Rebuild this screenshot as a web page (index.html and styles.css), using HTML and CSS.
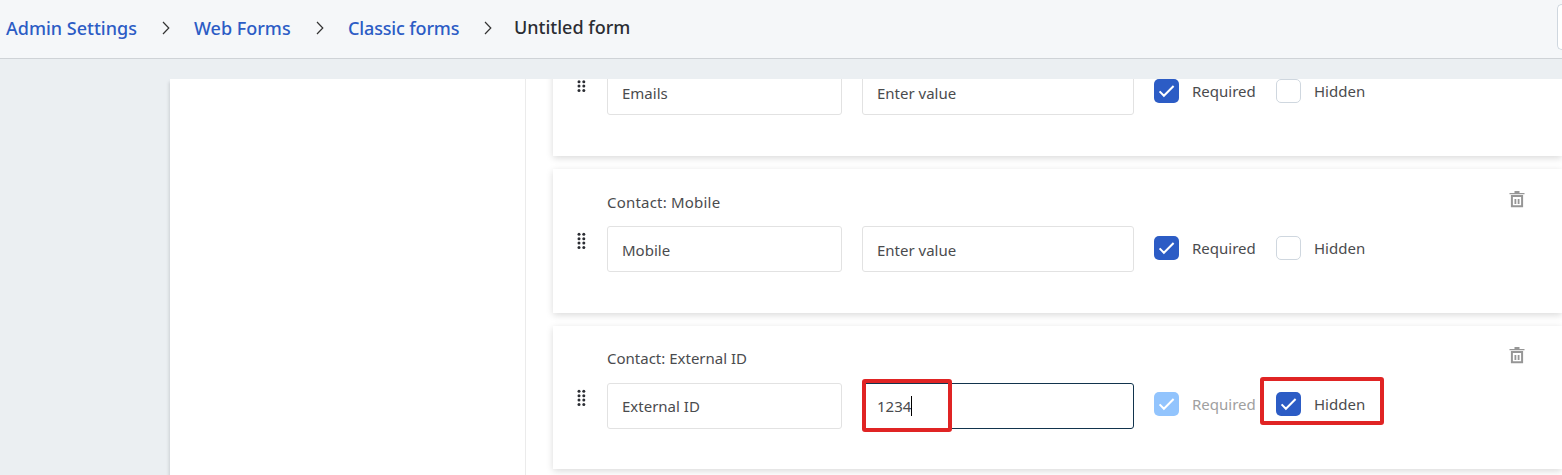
FILE: index.html
```html
<!DOCTYPE html>
<html lang="en">
<head>
    <meta charset="UTF-8">
    <meta name="viewport" content="width=device-width, initial-scale=1.0">
    <title>Untitled form</title>
    <link rel="stylesheet" href="styles.css">
</head>
<body>
    <!-- Shared icons -->
    <svg class="sprite" width="0" height="0">
        <symbol id="chevron" viewBox="0 0 8 14">
            <path d="M1 1l5.8 6L1 13" fill="none" stroke="#333" stroke-width="1.2"/>
        </symbol>
        <symbol id="drag" viewBox="0 0 10 18">
            <g fill="#2b2d33">
                <circle cx="2" cy="2.2" r="1.5"/><circle cx="6.8" cy="2.2" r="1.5"/>
                <circle cx="2" cy="6.7" r="1.5"/><circle cx="6.8" cy="6.7" r="1.5"/>
                <circle cx="2" cy="11.1" r="1.5"/><circle cx="6.8" cy="11.1" r="1.5"/>
                <circle cx="2" cy="15.6" r="1.5"/><circle cx="6.8" cy="15.6" r="1.5"/>
            </g>
        </symbol>
        <symbol id="trash" viewBox="0 0 16 17">
            <path d="M5.5 0h5v2h5v1.2h-15V2h5z" fill="#969696"/>
            <path d="M2.9 5h10.2v10.2H2.9z" fill="none" stroke="#969696" stroke-width="2"/>
            <path d="M6.4 8v5M9.6 8v5" stroke="#969696" stroke-width="1.8"/>
        </symbol>
        <symbol id="check" viewBox="0 0 25 24">
            <path d="M5.6 12.4l4.3 4.4L19.6 7" fill="none" stroke="#fff" stroke-width="2"/>
        </symbol>
    </svg>

    <header class="topbar">
        <nav class="breadcrumb">
            <a class="crumb">Admin Settings</a>
            <svg class="chevron"><use href="#chevron"/></svg>
            <a class="crumb">Web Forms</a>
            <svg class="chevron"><use href="#chevron"/></svg>
            <a class="crumb narrow">Classic forms</a>
            <svg class="chevron"><use href="#chevron"/></svg>
            <span class="crumb current">Untitled form</span>
        </nav>
        <div class="header-button"></div>
    </header>

    <main class="panel">
        <aside class="side"></aside>
        <section class="fields">
            <div class="card">
                <div class="card-head"></div>
                <div class="row">
                    <svg class="drag"><use href="#drag"/></svg>
                    <div class="field name">Emails</div>
                    <div class="field value">Enter value</div>
                    <div class="option required"><svg class="box checked"><use href="#check"/></svg><span>Required</span></div>
                    <div class="option"><span class="box"></span><span>Hidden</span></div>
                </div>
            </div>

            <div class="card">
                <div class="card-head"><span class="wide">Contact: Mobile</span><svg class="trash"><use href="#trash"/></svg></div>
                <div class="row">
                    <svg class="drag"><use href="#drag"/></svg>
                    <div class="field name">Mobile</div>
                    <div class="field value">Enter value</div>
                    <div class="option required"><svg class="box checked"><use href="#check"/></svg><span>Required</span></div>
                    <div class="option"><span class="box"></span><span>Hidden</span></div>
                </div>
            </div>

            <div class="card">
                <div class="card-head"><span>Contact: External ID</span><svg class="trash"><use href="#trash"/></svg></div>
                <div class="row">
                    <svg class="drag"><use href="#drag"/></svg>
                    <div class="field name">External ID</div>
                    <div class="field value focused"><span>1234</span><i class="caret"></i><div class="mark mark-value"></div></div>
                    <div class="option required disabled"><svg class="box checked"><use href="#check"/></svg><span>Required</span></div>
                    <div class="option"><svg class="box checked"><use href="#check"/></svg><span>Hidden</span><div class="mark mark-hidden"></div></div>
                </div>
            </div>
        </section>
    </main>
</body>
</html>
```

FILE: styles.css
```css
* {
    box-sizing: border-box;
}
body {
    margin: 0;
    height: 475px;
    overflow: hidden;
    display: flex;
    flex-direction: column;
    background: #ebeff2;
    color: #4a4b4e;
    font-family: "Noto Sans", "Open Sans", sans-serif;
    font-size: 15px;
}
.sprite {
    position: absolute;
}

/* Header */
.topbar {
    height: 59px;
    flex: none;
    display: flex;
    justify-content: space-between;
    background: #f5f7f9;
    border-bottom: 1px solid #cfd3d7;
}
.breadcrumb {
    display: grid;
    grid-template-columns: 156px 32px 122px 32px 136px 30px auto;
    align-items: center;
    padding: 0 0 3px 6px;
}
.crumb {
    font-size: 18px;
    font-weight: 500;
    line-height: 24px;
    color: #2c5cc5;
    white-space: nowrap;
}
.crumb.narrow {
    letter-spacing: -0.15px;
}
.crumb.current {
    color: #2b2d33;
    padding-bottom: 2px;
}
.chevron {
    width: 8px;
    height: 14px;
}
.header-button {
    width: 5px;
    height: 46px;
    margin-top: 4px;
    background: #fff;
    border: 1px solid #cfd7df;
    border-right: 0;
    border-radius: 5px 0 0 5px;
}

/* Form builder */
.panel {
    height: 396px;
    margin: 20px 0 0 170px;
    display: flex;
    overflow: hidden;
    background: #fff;
    box-shadow: -1px 3px 3px rgba(40, 50, 60, 0.17);
}
.side {
    width: 356px;
    flex: none;
    border-right: 1px solid #ebebeb;
}
.fields {
    flex: 1;
    margin-top: -66.8px;
    padding-left: 27px;
}
.card {
    height: 143.8px;
    margin-bottom: 12.9px;
    padding-left: 24px;
    background: #fff;
    box-shadow: 0 2px 7px rgba(0, 0, 0, 0.15);
}
.card-head {
    height: 57px;
    padding: 21.8px 37.5px 0 30px;
    display: flex;
    justify-content: space-between;
    line-height: 22px;
}
.wide {
    letter-spacing: 0.2px;
}
.trash {
    width: 16px;
    height: 17px;
}
.row {
    display: flex;
    align-items: flex-start;
}
.drag {
    width: 10px;
    height: 18px;
    margin: 6px 20px 0 0;
}
.field {
    position: relative;
    height: 46px;
    display: flex;
    align-items: center;
    padding: 1.5px 14px 0;
    border: 1px solid #e2e2e2;
    border-radius: 3px;
}
.name {
    width: 235px;
    margin-right: 20px;
}
.value {
    width: 272px;
    margin-right: 20px;
}
.focused {
    border-color: #12344d;
}
.caret {
    width: 1px;
    height: 20px;
    background: #000;
}
.option {
    position: relative;
    display: flex;
    align-items: center;
    height: 24px;
    margin-top: 9.7px;
}
.required {
    width: 122px;
}
.box {
    width: 25px;
    height: 24px;
    margin-right: 13px;
    flex: none;
    border: 1px solid #cfd7df;
    border-radius: 5px;
}
.checked {
    border: 0;
    background: #2c5cc5;
}
.disabled {
    color: #a0a0a0;
}
.disabled .checked {
    background: #92c4fd;
}

/* Highlight frames */
.mark {
    position: absolute;
    border: 4px solid #e02424;
    border-radius: 3px;
}
.mark-value {
    left: -1px;
    top: -5px;
    width: 90px;
    height: 53px;
}
.mark-hidden {
    left: -16px;
    top: -15px;
    width: 124px;
    height: 48px;
}
```
